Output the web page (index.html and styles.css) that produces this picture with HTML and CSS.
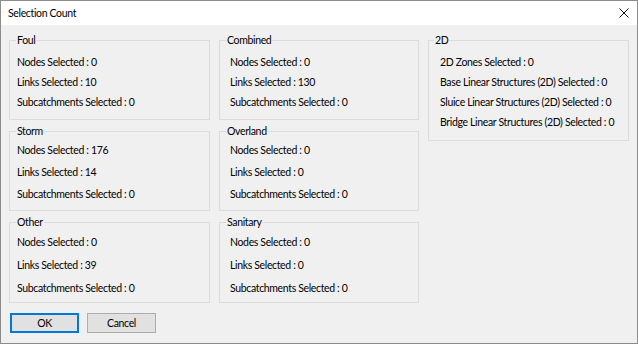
FILE: index.html
```html
<!DOCTYPE html>
<html lang="en">
<head>
    <meta charset="UTF-8">
    <meta name="viewport" content="width=device-width, initial-scale=1.0">
    <title>Selection Count</title>
    <link rel="stylesheet" href="styles.css">
</head>
<body>
    <div class="window">
        <div class="titlebar">
            <span class="title">Selection Count</span>
            <svg class="close" width="10" height="10" viewBox="0 0 10 10">
                <path d="M0.5 0.5 L9.5 9.5 M9.5 0.5 L0.5 9.5" stroke="#111" stroke-width="1" fill="none"/>
            </svg>
        </div>

        <div class="content">
            <div class="groups">
                <div class="column column-left">
                    <fieldset class="group group-top">
                        <legend>Foul</legend>
                        <div class="row">Nodes Selected : 0</div>
                        <div class="row">Links Selected : 10</div>
                        <div class="row">Subcatchments Selected : 0</div>
                    </fieldset>
                    <fieldset class="group group-mid">
                        <legend>Storm</legend>
                        <div class="row">Nodes Selected : 176</div>
                        <div class="row">Links Selected : 14</div>
                        <div class="row">Subcatchments Selected : 0</div>
                    </fieldset>
                    <fieldset class="group group-bottom">
                        <legend>Other</legend>
                        <div class="row">Nodes Selected : 0</div>
                        <div class="row">Links Selected : 39</div>
                        <div class="row">Subcatchments Selected : 0</div>
                    </fieldset>
                </div>

                <div class="column column-middle">
                    <fieldset class="group group-top">
                        <legend>Combined</legend>
                        <div class="row">Nodes Selected : 0</div>
                        <div class="row">Links Selected : 130</div>
                        <div class="row">Subcatchments Selected : 0</div>
                    </fieldset>
                    <fieldset class="group group-mid">
                        <legend>Overland</legend>
                        <div class="row">Nodes Selected : 0</div>
                        <div class="row">Links Selected : 0</div>
                        <div class="row">Subcatchments Selected : 0</div>
                    </fieldset>
                    <fieldset class="group group-bottom">
                        <legend>Sanitary</legend>
                        <div class="row">Nodes Selected : 0</div>
                        <div class="row">Links Selected : 0</div>
                        <div class="row">Subcatchments Selected : 0</div>
                    </fieldset>
                </div>

                <div class="column column-right">
                    <fieldset class="group group-2d">
                        <legend>2D</legend>
                        <div class="row">2D Zones Selected : 0</div>
                        <div class="row">Base Linear Structures (2D) Selected : 0</div>
                        <div class="row">Sluice Linear Structures (2D) Selected : 0</div>
                        <div class="row">Bridge Linear Structures (2D) Selected : 0</div>
                    </fieldset>
                </div>
            </div>

            <div class="buttons">
                <button class="btn btn-default">OK</button>
                <button class="btn">Cancel</button>
            </div>
        </div>
    </div>
</body>
</html>
```

FILE: styles.css
```css
* {
    box-sizing: border-box;
    margin: 0;
    padding: 0;
}

body {
    background-color: #f0f0f0;
    font-family: 'Lato', 'Open Sans', sans-serif;
    font-size: 10.5px;
    letter-spacing: -0.35px;
    color: #000;
}

.window {
    width: 638px;
    height: 344px;
    border: 1px solid #8c8c8c;
    background-color: #f0f0f0;
    display: flex;
    flex-direction: column;
}

/* Title bar */
.titlebar {
    height: 24px;
    background-color: #fff;
    display: flex;
    align-items: center;
    justify-content: space-between;
    padding: 0 8px 0 7px;
    flex-shrink: 0;
}

.title {
    line-height: 16px;
}

.close {
    display: block;
}

/* Group boxes */
.content {
    padding: 8px 0 0 8px;
}

.groups {
    display: flex;
    gap: 9px;
    align-items: flex-start;
}

.column {
    display: flex;
    flex-direction: column;
    gap: 4px;
}

.column-left,
.column-right {
    width: 201px;
}

.column-middle {
    width: 200px;
}

.group {
    border: 1px solid #dcdcdc;
    padding: 0 0 0 6px;
    display: flex;
    flex-direction: column;
    min-width: 0;
}

.group legend {
    padding: 0 1px;
    line-height: 14px;
}

.row {
    line-height: 20px;
    white-space: nowrap;
    padding-left: 1px;
}

.column-middle .row {
    padding-left: 4px;
}

.column-right .row {
    padding-left: 5px;
}

.column-right legend {
    margin-left: -1px;
}

.group-top {
    height: 87px;
    padding-top: 5px;
}

.group-mid {
    height: 87px;
    padding-top: 2px;
    gap: 2px;
}

.group-bottom {
    height: 88px;
    padding-top: 3px;
    gap: 3px;
}

.group-2d {
    height: 108px;
    padding-top: 5px;
}

/* Buttons */
.buttons {
    display: flex;
    gap: 8px;
    padding: 10px 0 0 1px;
}

.btn {
    width: 69px;
    height: 20px;
    background-color: #e1e1e1;
    border: 1px solid #adadad;
    font-family: inherit;
    font-size: 10.5px;
    letter-spacing: -0.35px;
    color: #000;
}

.btn-default {
    border: 1px solid #0078d7;
    box-shadow: inset 0 0 0 1px #0078d7;
}
```
